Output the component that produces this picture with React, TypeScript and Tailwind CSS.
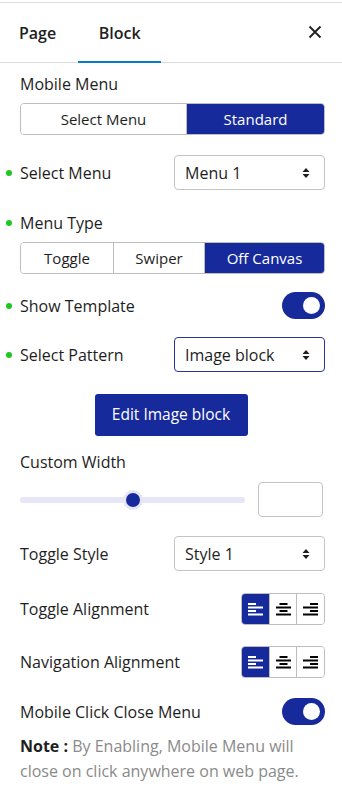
import React from 'react';

const BLUE = 'bg-[#172a9c]';

function Dot() {
  return <span className="absolute -left-[14px] top-1/2 h-[6px] w-[6px] -translate-y-1/2 rounded-full bg-[#1ec71e]" />;
}

function Label({ children, dot }: { children: React.ReactNode; dot?: boolean }) {
  return (
    <span className="relative text-[16px] leading-5 text-[#1e1e1e]">
      {dot && <Dot />}
      {children}
    </span>
  );
}

function Arrows() {
  return (
    <svg width="8" height="12" viewBox="0 0 8 12" className="shrink-0">
      <path d="M4 1 L7.5 5 H0.5 Z" fill="#1e1e1e" />
      <path d="M4 11 L7.5 7 H0.5 Z" fill="#1e1e1e" />
    </svg>
  );
}

function Select({ value, active }: { value: string; active?: boolean }) {
  return (
    <div
      className={
        'flex h-[35px] w-[151px] items-center justify-between rounded-[4px] border bg-white pl-[10px] pr-[14px] text-[16px] text-[#1e1e1e] ' +
        (active ? 'border-[#2a3590]' : 'border-[#c4c4c4]')
      }
    >
      <span>{value}</span>
      <Arrows />
    </div>
  );
}

function Segmented({ items, active, widths }: { items: string[]; active: number; widths: string[] }) {
  return (
    <div className="flex h-[32px] w-full overflow-hidden rounded-[4px] border border-[#bdbdbd]">
      {items.map((it, i) => (
        <div
          key={it}
          className={
            'flex items-center justify-center text-[15px] ' +
            widths[i] +
            (i > 0 ? ' border-l border-[#bdbdbd]' : '') +
            (i === active ? ' bg-[#172a9c] text-white' : ' bg-white text-[#1e1e1e]')
          }
        >
          {it}
        </div>
      ))}
    </div>
  );
}

function Toggle() {
  return (
    <div className={`flex h-[27px] w-[43px] items-center justify-end rounded-full ${BLUE} pr-[5px]`}>
      <span className="h-[17px] w-[17px] rounded-full bg-white" />
    </div>
  );
}

function AlignIcon({ kind, color }: { kind: 'left' | 'center' | 'right'; color: string }) {
  const lens = [8, 15, 8, 15];
  return (
    <svg width="15" height="14" viewBox="0 0 15 14">
      {lens.map((l, i) => {
        const x = kind === 'left' ? 0 : kind === 'center' ? (15 - l) / 2 : 15 - l;
        return <rect key={i} x={x} y={1 + i * 3.5} width={l} height="2" fill={color} />;
      })}
    </svg>
  );
}

function AlignGroup() {
  const kinds: ('left' | 'center' | 'right')[] = ['left', 'center', 'right'];
  return (
    <div className="flex h-[32px] w-[84px] overflow-hidden rounded-[4px] border border-[#bdbdbd]">
      {kinds.map((k, i) => (
        <div
          key={k}
          className={
            'flex flex-1 items-center justify-center ' +
            (i > 0 ? 'border-l border-[#bdbdbd] ' : '') +
            (i === 0 ? 'bg-[#172a9c]' : 'bg-white')
          }
        >
          <AlignIcon kind={k} color={i === 0 ? '#ffffff' : '#000000'} />
        </div>
      ))}
    </div>
  );
}

function Row({ children }: { children: React.ReactNode }) {
  return <div className="flex items-center justify-between">{children}</div>;
}

export default function App() {
  return (
    <div className="h-[802px] w-[342px] bg-white pt-[2px] font-['Open_Sans','Noto_Sans',sans-serif]">
      {/* Tabs */}
      <div className="flex h-[61px] items-center border-y border-[#dddddd] pl-[19px] pr-[20px]">
        <div className="relative flex h-full items-center text-[16px] font-semibold text-[#1e1e1e]">
          <span>Page</span>
        </div>
        <div className="relative ml-[22px] flex h-full w-[83px] items-center justify-center text-[16px] font-semibold text-[#1e1e1e]">
          <span>Block</span>
          <span className="absolute -bottom-px left-0 h-[2px] w-full bg-[#0a7cc4]" />
        </div>
        <div className="flex-1" />
        <svg width="14" height="14" viewBox="0 0 14 14" className="mb-[2px]">
          <path d="M1.5 1.5 L12.5 12.5 M12.5 1.5 L1.5 12.5" stroke="#1e1e1e" strokeWidth="1.8" />
        </svg>
      </div>

      <div className="pl-5 pr-[17px]">
        <div className="pt-[9px]">
          <Label>Mobile Menu</Label>
        </div>
        <div className="mt-[7px]">
          <Segmented items={['Select Menu', 'Standard']} active={1} widths={['w-[165px]', 'flex-1']} />
        </div>

        <div className="mt-[20px]">
          <Row>
            <Label dot>Select Menu</Label>
            <Select value="Menu 1" />
          </Row>
        </div>

        <div className="mt-[21px]">
          <Label dot>Menu Type</Label>
        </div>
        <div className="mt-[7px]">
          <Segmented items={['Toggle', 'Swiper', 'Off Canvas']} active={2} widths={['w-[92px]', 'w-[91px]', 'flex-1']} />
        </div>

        <div className="mt-[18px]">
          <Row>
            <Label dot>Show Template</Label>
            <Toggle />
          </Row>
        </div>

        <div className="mt-[18px]">
          <Row>
            <Label dot>Select Pattern</Label>
            <Select value="Image block" active />
          </Row>
        </div>

        <div className="mt-[22px] flex justify-center pr-[3px]">
          <button className={`h-[42px] w-[153px] rounded-[3px] ${BLUE} text-[15.5px] text-white`}>Edit Image block</button>
        </div>

        <div className="mt-[14px]">
          <Label>Custom Width</Label>
        </div>
        <div className="mt-[8px] flex items-center justify-between">
          <div className="relative h-[6px] w-[225px] rounded-full bg-[#e6e6f6]">
            <span className="absolute left-[103px] top-1/2 h-[20px] w-[20px] -translate-y-1/2 rounded-full bg-[#e6e6f6]" />
            <span className={`absolute left-[106px] top-1/2 h-[14px] w-[14px] -translate-y-1/2 rounded-full ${BLUE}`} />
          </div>
          <div className="mr-[2px] h-[35px] w-[65px] rounded-[4px] border border-[#c4c4c4] bg-white" />
        </div>

        <div className="mt-[19px]">
          <Row>
            <Label>Toggle Style</Label>
            <Select value="Style 1" />
          </Row>
        </div>

        <div className="mt-[22px]">
          <Row>
            <Label>Toggle Alignment</Label>
            <AlignGroup />
          </Row>
        </div>

        <div className="mt-[21px]">
          <Row>
            <Label>Navigation Alignment</Label>
            <AlignGroup />
          </Row>
        </div>

        <div className="mt-[20px]">
          <Row>
            <Label>Mobile Click Close Menu</Label>
            <Toggle />
          </Row>
        </div>

        <p className="mt-[9px] text-[16px] leading-[25px] text-[#8a8a8a]">
          <span className="font-bold text-[#1e1e1e]">Note :</span> By Enabling, Mobile Menu will close on click anywhere on web page.
        </p>
      </div>
    </div>
  );
}
